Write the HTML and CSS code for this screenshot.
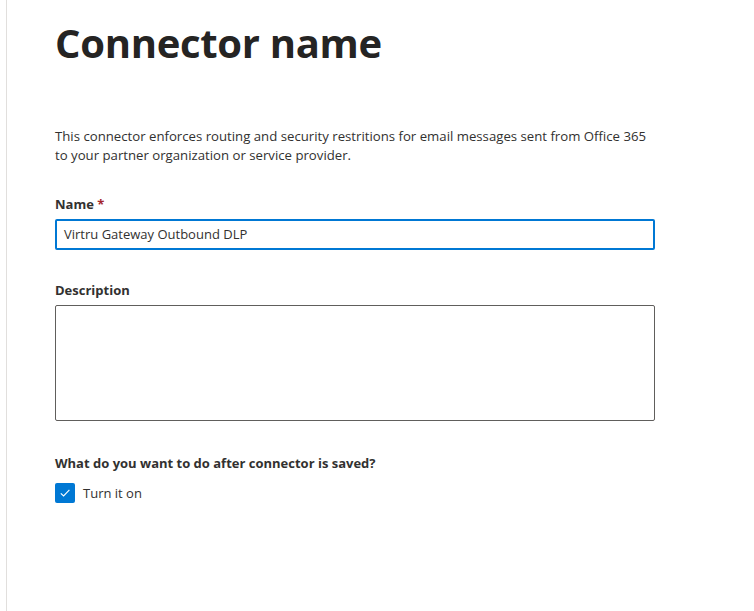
FILE: index.html
```html
<!DOCTYPE html>
<html>
<head>
<meta charset="utf-8">
<link rel="stylesheet" href="styles.css">
</head>
<body>
<div class="page">
  <div class="panel">
    <h1 class="title">Connector name</h1>
    <p class="intro">This connector enforces routing and security restritions for email messages sent from Office 365 to your partner organization or service provider.</p>
    <div class="field">
      <label class="label">Name <span class="req">*</span></label>
      <div class="input">Virtru Gateway Outbound DLP</div>
    </div>
    <div class="field desc">
      <label class="label">Description</label>
      <div class="textarea"></div>
    </div>
    <div class="field after">
      <div class="label">What do you want to do after connector is saved?</div>
      <div class="check-row">
        <span class="checkbox">
          <svg width="12" height="12" viewBox="0 0 12 12"><path d="M1.8 6.3 L4.6 9 L10.4 2.8" fill="none" stroke="#fff" stroke-width="1.1"/></svg>
        </span>
        <span class="check-label">Turn it on</span>
      </div>
    </div>
  </div>
</div>
</body>
</html>
```
FILE: styles.css
```css
html, body {
  margin: 0;
  padding: 0;
  background: #fff;
}
body {
  font-family: "Open Sans", "Noto Sans", sans-serif;
  color: #323130;
}
.page {
  height: 611px;
  padding-left: 6px;
  box-sizing: border-box;
}
.panel {
  border-left: 1px solid #e1dfdd;
  height: 100%;
  padding-left: 48px;
  width: 600px;
}
.title {
  margin: 0;
  padding-top: 15px;
  font-size: 40px;
  font-weight: 700;
  line-height: 56px;
  color: #252423;
  letter-spacing: -0.3px;
}
.intro {
  margin: 0;
  margin-top: 56px;
  max-width: 612px;
  font-size: 13.2px;
  line-height: 19px;
  color: #323130;
}
.field {
  margin-top: 29px;
}
.label {
  display: block;
  font-size: 13px;
  font-weight: 700;
  line-height: 20px;
  color: #323130;
  margin-bottom: 5px;
}
.req {
  color: #a4262c;
}
.input {
  box-sizing: border-box;
  height: 31px;
  border: 2px solid #0078d4;
  border-radius: 2px;
  padding: 0 7px;
  font-size: 13px;
  line-height: 27px;
  color: #323130;
}
.desc {
  margin-top: 30px;
}
.textarea {
  box-sizing: border-box;
  height: 116px;
  border: 1px solid #605e5c;
  border-radius: 2px;
}
.after {
  margin-top: 32px;
}
.check-row {
  display: flex;
  align-items: center;
  margin-top: 10px;
}
.checkbox {
  width: 20px;
  height: 20px;
  background: #0078d4;
  border-radius: 2px;
  display: flex;
  align-items: center;
  justify-content: center;
}
.check-label {
  margin-left: 8px;
  font-size: 13px;
  line-height: 20px;
  color: #323130;
}
```
